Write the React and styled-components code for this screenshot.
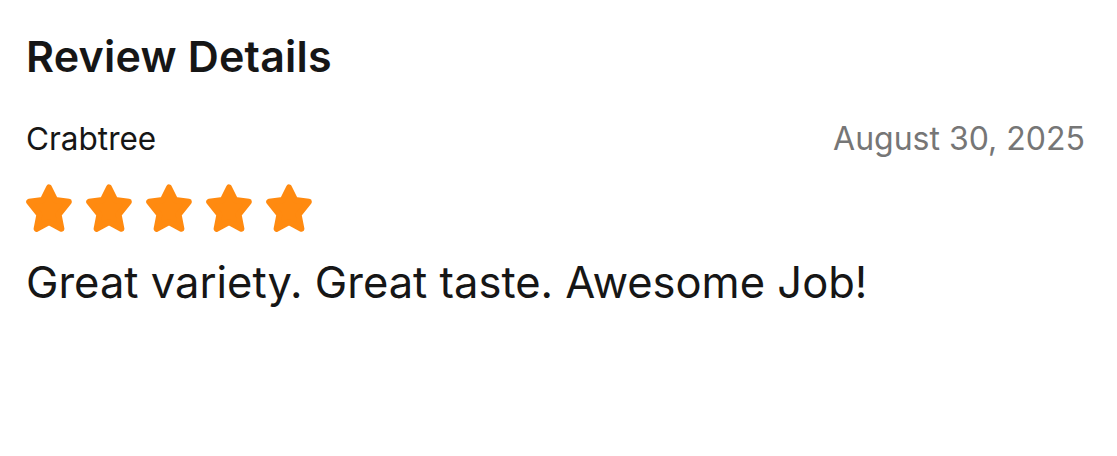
import React from "react";
import styled, { createGlobalStyle } from "styled-components";

const Global = createGlobalStyle`
  html, body { margin: 0; padding: 0; background: #ffffff; }
  body { font-family: Inter, "Noto Sans", sans-serif; -webkit-font-smoothing: antialiased; }
`;

const Panel = styled.section`
  box-sizing: border-box;
  width: 1117px;
  height: 456px;
  padding: 31px 32px 0 26px;
  display: flex;
  flex-direction: column;
  background: #fff;
`;

const Title = styled.h1`
  margin: 0;
  font-size: 43px;
  font-weight: 600;
  line-height: 50px;
  color: #161616;
  letter-spacing: 0.2px;
`;

const MetaRow = styled.div`
  margin-top: 40px;
  display: flex;
  justify-content: space-between;
  align-items: baseline;
`;

const Author = styled.span`
  font-size: 31.5px;
  line-height: 36px;
  color: #161616;
`;

const DateText = styled.span`
  font-size: 32px;
  line-height: 36px;
  color: #767676;
`;

const Stars = styled.div`
  margin-top: 27px;
  display: flex;
  gap: 14px;
`;

const StarSvg = styled.svg`
  width: 46px;
  height: 48px;
  display: block;
`;

const Body = styled.p`
  margin: 25px 0 0;
  font-size: 43.5px;
  line-height: 50px;
  color: #161616;
`;

const Star = () => (
  <StarSvg viewBox="0 0 46 48">
    <path
      d="M23 3.5 L29.2 16 L42.8 17.8 L32.6 30.5 L35.4 44.8 L23 38 L10.6 44.8 L13.4 30.5 L3.2 17.8 L16.8 16 Z"
      fill="#FF8A10"
      stroke="#FF8A10"
      strokeWidth="6"
      strokeLinejoin="round"
    />
  </StarSvg>
);

export default function App() {
  return (
    <>
      <Global />
      <Panel>
        <Title>Review Details</Title>
        <MetaRow>
          <Author>Crabtree</Author>
          <DateText>August 30, 2025</DateText>
        </MetaRow>
        <Stars>
          {[0, 1, 2, 3, 4].map((i) => (
            <Star key={i} />
          ))}
        </Stars>
        <Body>Great variety. Great taste. Awesome Job!</Body>
      </Panel>
    </>
  );
}
